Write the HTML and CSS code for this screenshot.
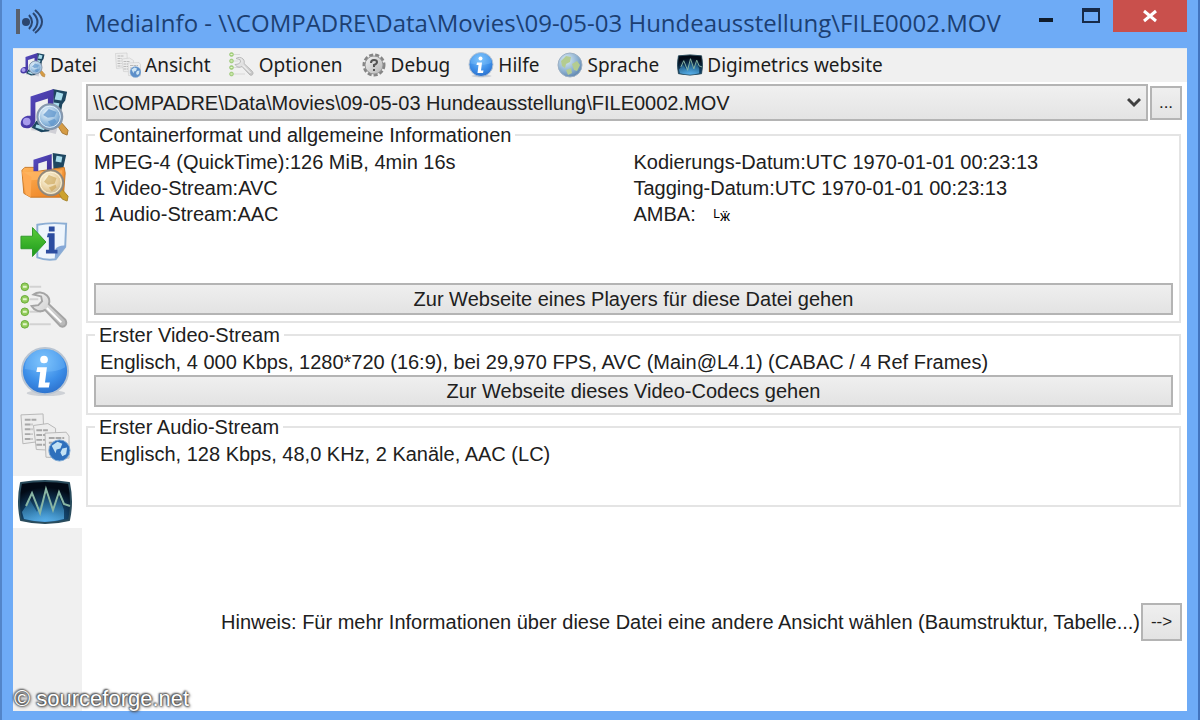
FILE: index.html
```html
<!DOCTYPE html>
<html lang="de">
<head>
<meta charset="utf-8">
<title>MediaInfo</title>
<link rel="stylesheet" href="styles.css">
</head>
<body>
<svg class="defs" aria-hidden="true">
  <defs>
    <linearGradient id="g-note" x1="0" y1="0" x2="1" y2="1"><stop offset="0" stop-color="#5a50c8"/><stop offset="1" stop-color="#3a2a8c"/></linearGradient>
    <linearGradient id="g-folder" x1="0" y1="0" x2="1" y2="1"><stop offset="0" stop-color="#ffb45a"/><stop offset="1" stop-color="#ea7a1a"/></linearGradient>
    <linearGradient id="g-green" x1="0" y1="0" x2="0" y2="1"><stop offset="0" stop-color="#5ccc3a"/><stop offset="1" stop-color="#1c9a1c"/></linearGradient>
    <linearGradient id="g-metal" x1="0" y1="0" x2="1" y2="1"><stop offset="0" stop-color="#f4f4f4"/><stop offset="1" stop-color="#b4b4b4"/></linearGradient>
    <radialGradient id="g-lens" cx=".4" cy=".35" r=".7"><stop offset="0" stop-color="#f2faff"/><stop offset=".6" stop-color="#8fb8dc"/><stop offset="1" stop-color="#5a86b8"/></radialGradient>
    <radialGradient id="g-lens2" cx=".4" cy=".35" r=".7"><stop offset="0" stop-color="#fffbe8"/><stop offset=".6" stop-color="#e8cfa0"/><stop offset="1" stop-color="#b8b098"/></radialGradient>
    <radialGradient id="g-blue" cx=".45" cy=".3" r=".75"><stop offset="0" stop-color="#78c0fc"/><stop offset=".6" stop-color="#3c8ee8"/><stop offset="1" stop-color="#2a6cc8"/></radialGradient>
    <radialGradient id="g-globe" cx=".35" cy=".3" r=".8"><stop offset="0" stop-color="#dcecf4"/><stop offset=".6" stop-color="#8cb0d0"/><stop offset="1" stop-color="#547ca8"/></radialGradient>
    <radialGradient id="g-scope" cx=".5" cy=".95" r=".8"><stop offset="0" stop-color="#4a9ce0"/><stop offset=".4" stop-color="#17507c"/><stop offset="1" stop-color="#020a16"/></radialGradient>
    <linearGradient id="g-glow" x1="0" y1="0" x2="0" y2="1"><stop offset="0" stop-color="#2c7fae" stop-opacity=".3"/><stop offset="1" stop-color="#5cb4ec"/></linearGradient>
    <symbol id="i-music" viewBox="0 0 52 52">
      <path d="M12 42c8 1 15 1 26 4" stroke="#d0d0d6" stroke-width="6" fill="none"/>
      <path d="M34 2l15 3-2 9-3 4-2 12-12 16-8 1-10-5 5-7 12 2 6-17z" fill="#1d4660"/>
      <path d="M38 5l7 2-2 7-7-1zM35 16l6 1-2 8-6-2zM17 39l10 2-2 4-9-3z" fill="#a8dcec"/>
      <path d="M11 10l24-8v6l-1 21-5 1V12l-13 4v19c-1 5-5 8-9 8-5 0-7-3-6-7 1-4 5-7 10-6z" fill="url(#g-note)"/>
      <ellipse cx="7" cy="36" rx="4" ry="4" fill="#a89cec"/>
      <path d="M39 40l4-3 7 8-1 5-5-2z" fill="#d69c45" stroke="#a87834"/>
      <circle cx="31" cy="31" r="13" fill="url(#g-lens)" stroke="#8898ac" stroke-width="2"/>
      <path d="M24 29l6-6 8 3-2 5-7 1zM29 36l7-3 2 3-5 5z" fill="#5f96cc" opacity=".75"/>
      <circle cx="31" cy="31" r="11" fill="none" stroke="#e8f2fa"/>
    </symbol>
    <symbol id="i-folder" viewBox="0 0 52 52">
      <path d="M34 1l14 2-2 9-2 10h-9z" fill="#1d4660"/><path d="M38 4l6 1-1 6-6-1z" fill="#a8dcec"/>
      <path d="M2 19l3-3h10l4 4 27-4 1 6-2 25-34 0-7-4z" fill="url(#g-folder)" stroke="#c87828"/>
      <path d="M14 20V8l19-6v19l-5 2V9l-9 3v8z" fill="url(#g-note)"/>
      <path d="M4 21l40-2v8L4 30z" fill="#ffb866" opacity=".7"/>
      <path d="M2 20l4 24 5 3 1-21z" fill="#ffab55"/>
      <path d="M39 41l4-3 7 8-1 5-5-2z" fill="#cda22e" stroke="#a8862c"/>
      <circle cx="32" cy="32" r="13" fill="url(#g-lens2)" stroke="#90887c" stroke-width="2"/>
      <path d="M25 31l5-7 8 3-2 6-7 1zM30 37l7-3 1 3-5 4z" fill="#c8a050" opacity=".6"/>
      <circle cx="32" cy="32" r="11" fill="none" stroke="#fff6dc"/>
    </symbol>
    <symbol id="i-export" viewBox="0 0 52 52">
      <path d="M18 8c10-2 20-2 30-1l-1 24-10 13c-8 1-14 0-19-2z" fill="#eef5fc" stroke="#8caed4" stroke-width="2"/>
      <path d="M48 30c-5-1-9 1-11 3l-1 11z" fill="#86a8d8"/>
      <path d="M29 17h7v17h3v4H27v-4h3V21h-2zM30 10h6v5h-6z" fill="#2c4da0"/>
      <path d="M1 20h12v-9l14 15-14 15v-8H1z" fill="url(#g-green)" stroke="#2f982b"/>
    </symbol>
    <symbol id="i-tools" viewBox="0 0 52 52">
      <path d="M10 5h12M10 18h9M10 31h12M10 44h22" stroke="#d2d2d2" stroke-width="2"/>
      <g fill="#93cc5c" stroke="#68ac38"><circle cx="5" cy="5" r="4"/><circle cx="5" cy="18" r="4"/><circle cx="5" cy="31" r="4"/><circle cx="5" cy="44" r="4"/></g>
      <path d="M3 5h4M3 18h4M3 31h4M3 44h4" stroke="#e4f6cc" stroke-width="2"/>
      <path d="M14 13c4-3 10-3 14 1 3 3 3 6 2 9l17 16c3 5-1 9-5 7L26 29c-5 3-11 1-14-4l7-1 4-4-1-5z" fill="url(#g-metal)" stroke="#a4a4a4" stroke-width="2"/>
      <path d="M28 27l15 15" stroke="#fff" stroke-width="2"/>
    </symbol>
    <symbol id="i-info" viewBox="0 0 52 52">
      <ellipse cx="27" cy="48" rx="20" ry="3" fill="#b8bcc4" opacity=".6"/>
      <circle cx="26" cy="25" r="24" fill="url(#g-blue)" stroke="#b8c4d2" stroke-width="2"/>
      <path d="M5 23a21 20 0 0 1 42-2c-14 8-28 4-42 2z" fill="#8cccff" opacity=".3"/>
      <circle cx="25" cy="13" r="4" fill="#fff"/>
      <path d="M18 21h10l-2 16h5l-1 5H19l2-16h-4z" fill="#fff"/>
    </symbol>
    <symbol id="i-sheets" viewBox="0 0 52 52">
      <g fill="#ededed" stroke="#b6b6b6"><path d="M1 3l23-1 1 28-22 3z"/><path d="M14 14l15-2 8 5v23l-20-1z"/><path d="M26 22l22-1 3 4v23l-24-1z"/></g>
      <path d="M5 8h12M5 13h8M5 18h8M5 23h8M5 28h8M17 19h12M17 24h9M17 29h9M17 34h9M30 27h16M30 32h8M30 37h6M30 42h6" stroke="#a8a8a8" stroke-width="2" stroke-dasharray="6 1"/>
      <circle cx="41" cy="40" r="11" fill="#2d6fbc" stroke="#7da9d4"/>
      <path d="M33 35l6-4 5 2-2 5-4 1-1 4zM44 38l5-1-1 7-4 2-2-4z" fill="#c2e1f4"/>
    </symbol>
    <symbol id="i-scope" viewBox="0 0 54 46">
      <path d="M3 4Q27 0 51 4q4 19 0 37-24 6-48 0Q-1 23 3 4z" fill="url(#g-scope)" stroke="#294b5c" stroke-width="2"/>
      <path d="M4 33l8-12 7 12 9-18 7 16 6-14 5 14v9Q27 45 6 40z" fill="url(#g-glow)" opacity=".8"/>
      <path d="M8 27l6-13 8 20 6-24 7 21 6-18 5 12 6 2" fill="none" stroke="#89b6a4" stroke-width="2"/>
    </symbol>
    <symbol id="i-gear" viewBox="0 0 26 26">
      <circle cx="13" cy="13" r="10" fill="none" stroke="#858585" stroke-width="3" stroke-dasharray="4 2"/>
      <circle cx="13" cy="13" r="9" fill="url(#g-metal)" stroke="#969696"/>
      <path d="M10 11q0-3 3-3t3 2q0 2-3 3v2M13 17v2" fill="none" stroke="#545454" stroke-width="2"/>
    </symbol>
    <symbol id="i-globe" viewBox="0 0 26 26">
      <circle cx="13" cy="13" r="12" fill="url(#g-globe)" stroke="#9cb0c4"/>
      <path d="M4 9l5-5 5 1-1 5-4 2-1 4-3-2zM15 12l5-3 3 4-3 6-3-1zM9 18l5-2 1 5-4 2z" fill="#b4cc90"/>
    </symbol>
  </defs>
</svg>

<div class="window">
  <header class="titlebar">
    <svg class="app-icon" viewBox="0 0 28 28" aria-hidden="true">
      <path d="M3 1v25" stroke="#59606c" stroke-width="4"/>
      <circle cx="11" cy="14" r="4" fill="#2b4670"/>
      <path d="M14 7q6 7 0 14M18 5q9 9 0 18M20 2q14 12 0 23" fill="none" stroke="#2b4670" stroke-width="2"/>
    </svg>
    <h1 class="title">MediaInfo - \\COMPADRE\Data\Movies\09-05-03 Hundeausstellung\FILE0002.MOV</h1>
    <div class="controls">
      <button class="control" type="button" aria-label="Minimieren"><svg viewBox="0 0 18 18"><path d="M2 13h14" stroke="#101c2c" stroke-width="4"/></svg></button>
      <button class="control" type="button" aria-label="Maximieren"><svg viewBox="0 0 18 18"><path d="M1 3h16v12H1z" fill="none" stroke="#172a48" stroke-width="2"/><path d="M0 3h18" stroke="#172a48" stroke-width="4"/></svg></button>
      <button class="control close" type="button" aria-label="Schließen"><svg viewBox="0 0 18 18"><path d="M3 4l12 10M15 4L3 14" stroke="#fff" stroke-width="3"/></svg></button>
    </div>
  </header>

  <div class="client">
    <nav class="menubar">
      <button class="menu" type="button"><svg><use href="#i-music"/></svg>Datei</button>
      <button class="menu" type="button"><svg class="faint"><use href="#i-sheets"/></svg>Ansicht</button>
      <button class="menu" type="button"><svg class="faint"><use href="#i-tools"/></svg>Optionen</button>
      <button class="menu" type="button"><svg><use href="#i-gear"/></svg>Debug</button>
      <button class="menu" type="button"><svg><use href="#i-info"/></svg>Hilfe</button>
      <button class="menu" type="button"><svg><use href="#i-globe"/></svg>Sprache</button>
      <button class="menu" type="button"><svg><use href="#i-scope"/></svg>Digimetrics website</button>
    </nav>

    <div class="workspace">
      <aside class="toolbar">
        <button class="tool" type="button" aria-label="Datei öffnen"><svg><use href="#i-music"/></svg></button>
        <button class="tool" type="button" aria-label="Ordner öffnen"><svg><use href="#i-folder"/></svg></button>
        <button class="tool" type="button" aria-label="Exportieren"><svg><use href="#i-export"/></svg></button>
        <button class="tool" type="button" aria-label="Optionen"><svg><use href="#i-tools"/></svg></button>
        <button class="tool" type="button" aria-label="Über"><svg><use href="#i-info"/></svg></button>
        <button class="tool" type="button" aria-label="Ansicht"><svg><use href="#i-sheets"/></svg></button>
        <button class="tool tool-white" type="button" aria-label="Digimetrics"><svg><use href="#i-scope"/></svg></button>
      </aside>

      <main class="content">
        <div class="file-row">
          <div class="combo">
            <select class="file-select" aria-label="Datei">
              <option>\\COMPADRE\Data\Movies\09-05-03 Hundeausstellung\FILE0002.MOV</option>
            </select>
            <svg class="chevron" viewBox="0 0 14 12" aria-hidden="true"><path d="M1 2l6 6 6-6" fill="none" stroke="#404040" stroke-width="3"/></svg>
          </div>
          <button class="push browse" type="button">...</button>
        </div>

        <fieldset class="group">
          <legend>Containerformat und allgemeine Informationen</legend>
          <div class="columns">
            <div>
              <p>MPEG-4 (QuickTime):126 MiB, 4min 16s</p>
              <p>1 Video-Stream:AVC</p>
              <p>1 Audio-Stream:AAC</p>
            </div>
            <div>
              <p>Kodierungs-Datum:UTC 1970-01-01 00:23:13</p>
              <p>Tagging-Datum:UTC 1970-01-01 00:23:13</p>
              <p>AMBA: <span class="raw"><span class="raw-high">L</span>ӝ</span></p>
            </div>
          </div>
          <button class="push wide" type="button">Zur Webseite eines Players für diese Datei gehen</button>
        </fieldset>

        <fieldset class="group">
          <legend>Erster Video-Stream</legend>
          <p class="stream">Englisch, 4 000 Kbps, 1280*720 (16:9), bei 29,970 FPS, AVC (Main@L4.1) (CABAC / 4 Ref Frames)</p>
          <button class="push wide" type="button">Zur Webseite dieses Video-Codecs gehen</button>
        </fieldset>

        <fieldset class="group audio">
          <legend>Erster Audio-Stream</legend>
          <p class="stream">Englisch, 128 Kbps, 48,0 KHz, 2 Kanäle, AAC (LC)</p>
        </fieldset>

        <div class="hint">
          <span>Hinweis: Für mehr Informationen über diese Datei eine andere Ansicht wählen (Baumstruktur, Tabelle...)</span>
          <button class="push next" type="button">--&gt;</button>
        </div>
      </main>
    </div>
  </div>
  <div class="watermark">© sourceforge.net</div>
</div>
</body>
</html>
```
FILE: styles.css
```css
* { box-sizing: border-box; }

body {
  margin: 0;
  color: #202020;
  font: 20px/26px "Liberation Sans", Arial, sans-serif;
}

button, select { font: inherit; color: inherit; }
button { padding: 0; border: 0; background: none; }
p { margin: 0; white-space: nowrap; }

.defs { position: absolute; width: 0; height: 0; }

.window {
  position: relative;
  display: flex;
  flex-direction: column;
  min-height: 100vh;
  padding: 0 11px 9px 11px;
  background: #6eabf6;
  border-left: 2px solid #5385c8;
  border-right: 2px solid #4274be;
}

.titlebar { display: flex; align-items: flex-start; height: 48px; }
.app-icon { width: 28px; height: 28px; margin: 8px 0 0 2px; }

.title {
  flex: 1;
  margin: 5px 0 0 42px;
  color: #1c3f72;
  font: 400 24px/36px "Open Sans", "Noto Sans", sans-serif;
  white-space: nowrap;
}

.controls { display: flex; }
.control { display: grid; place-items: center; width: 45px; height: 32px; }
.control svg { width: 18px; height: 18px; }
.close { width: 74px; background: #c9504c; }

.client {
  flex: 1;
  display: flex;
  flex-direction: column;
  background: #fff;
  border-top: 1px solid #e0e8f0;
}

.menubar {
  display: flex;
  gap: 18px;
  height: 33px;
  padding: 0 0 2px 7px;
  background: #f0f0f0;
  font: 19px/30px "Noto Sans", sans-serif;
}

.menu { display: flex; align-items: center; gap: 4px; color: #1c1c1c; white-space: nowrap; }
.menu svg { width: 26px; height: 26px; }
.menu .faint { opacity: 0.75; }

.workspace { flex: 1; display: flex; }

.toolbar {
  display: flex;
  flex-direction: column;
  gap: 13px;
  width: 69px;
  padding-top: 4px;
  background: #f0f0f0;
}

.tool { display: grid; place-items: center start; height: 52px; padding-left: 5px; }
.tool svg { width: 54px; height: 50px; }
.tool-white { background: #fff; }

.content {
  flex: 1;
  display: flex;
  flex-direction: column;
  min-width: 0;
  padding: 2px 5px 70px 4px;
}

.file-row { display: flex; align-items: center; gap: 2px; }
.combo { position: relative; flex: 1; }

.file-select {
  display: block;
  width: 100%;
  height: 37px;
  padding: 0 32px 0 5px;
  appearance: none;
  border: 2px solid #b4b4b4;
  border-radius: 0;
  background: linear-gradient(#f0f0f0, #e4e4e4);
}

.chevron { position: absolute; right: 7px; top: 13px; width: 14px; height: 12px; pointer-events: none; }

.push {
  border: 2px solid #b4b4b4;
  background: linear-gradient(#efefef, #e3e3e3);
}

.browse { width: 32px; height: 34px; font-size: 17px; }

.group {
  min-width: 0;
  margin: 0 1px 0 0;
  padding: 0 6px 6px;
  border: 2px solid #e4e4e4;
}

.group legend { margin-left: 1px; padding: 0 4px; line-height: 28px; }
.group + .group { margin-top: -2px; }
.columns { display: grid; grid-template-columns: 1fr 1fr; min-height: 134px; }
.wide { display: block; width: 100%; height: 32px; line-height: 28px; }
.stream { padding-left: 6px; }
.audio { min-height: 94px; }

.raw { margin-left: 12px; font-size: 15px; color: #000; }
.raw-high { font-size: 12px; vertical-align: 3px; }

.hint {
  display: flex;
  align-items: center;
  justify-content: flex-end;
  gap: 1px;
  margin-top: auto;
  white-space: nowrap;
}

.next { width: 41px; height: 38px; font-size: 17px; line-height: 30px; }

.watermark {
  position: absolute;
  left: 12px;
  bottom: 8px;
  color: #fff;
  font-size: 22px;
  text-shadow: 0 0 2px #444, 0 0 2px #444, 1px 1px 3px #555, -1px -1px 2px #555;
}
```
